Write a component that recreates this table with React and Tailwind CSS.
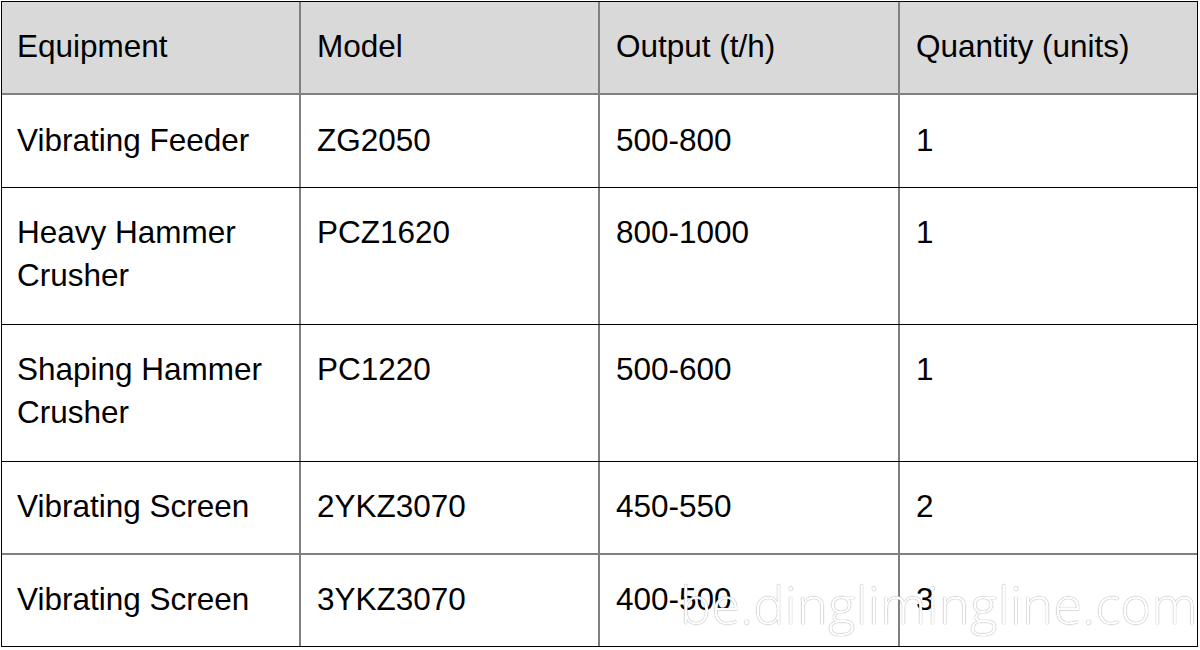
import React from "react";

const rows = [
  { cells: ["Vibrating Feeder", "ZG2050", "500-800", "1"], h: "h-[94px]", pt: "pt-[24px]", border: "border-t-2 border-[#808080]" },
  { cells: [["Heavy Hammer", "Crusher"], "PCZ1620", "800-1000", "1"], h: "h-[137px]", pt: "pt-[23px]", border: "border-t border-black" },
  { cells: [["Shaping Hammer", "Crusher"], "PC1220", "500-600", "1"], h: "h-[137px]", pt: "pt-[23px]", border: "border-t border-black" },
  { cells: ["Vibrating Screen", "2YKZ3070", "450-550", "2"], h: "h-[92px]", pt: "pt-[23px]", border: "border-t border-black" },
  { cells: ["Vibrating Screen", "3YKZ3070", "400-500", "3"], h: "h-[93px]", pt: "pt-[23px]", border: "border-t-2 border-[#808080]" },
];

const cols = "grid grid-cols-[299px_299px_300px_1fr]";

function Cell({ children, idx, pt }) {
  const lines = Array.isArray(children) ? children : [children];
  const last = idx === 3;
  return (
    <div className={`${pt} ${idx === 0 ? "pl-[15px]" : "pl-[16px]"} ${last ? "" : "border-r-2 border-[#808080]"}`}>
      {lines.map((l, i) => (
        <div key={i} className="leading-[43px] whitespace-nowrap">{l}</div>
      ))}
    </div>
  );
}

export default function App() {
  return (
    <div className="relative w-[1200px] h-[650px] bg-white overflow-hidden">
      <div
        className="ml-[1px] mt-[1px] w-[1197px] border border-black text-[31.5px] text-black"
        style={{ fontFamily: '"Liberation Sans", Arial, sans-serif' }}
      >
        <div className={`${cols} h-[91px] bg-[#d9d9d9]`}>
          {["Equipment", "Model", "Output (t/h)", "Quantity (units)"].map((c, i) => (
            <Cell key={i} idx={i} pt="pt-[23px]">{c}</Cell>
          ))}
        </div>
        {rows.map((r, ri) => (
          <div key={ri} className={`${cols} ${r.h} ${r.border}`}>
            {r.cells.map((c, i) => (
              <Cell key={i} idx={i} pt={r.pt}>{c}</Cell>
            ))}
          </div>
        ))}
      </div>
      <div
        className="absolute left-[680px] top-[578px] text-[52px] font-light text-white leading-none whitespace-nowrap tracking-[0.5px]"
        style={{
          fontFamily: '"Open Sans", "Noto Sans", sans-serif',
          textShadow: "0 0 1px #9a9a9a, 0 0 1px #b0b0b0",
        }}
      >
        be.dinglimingline.com
      </div>
    </div>
  );
}
